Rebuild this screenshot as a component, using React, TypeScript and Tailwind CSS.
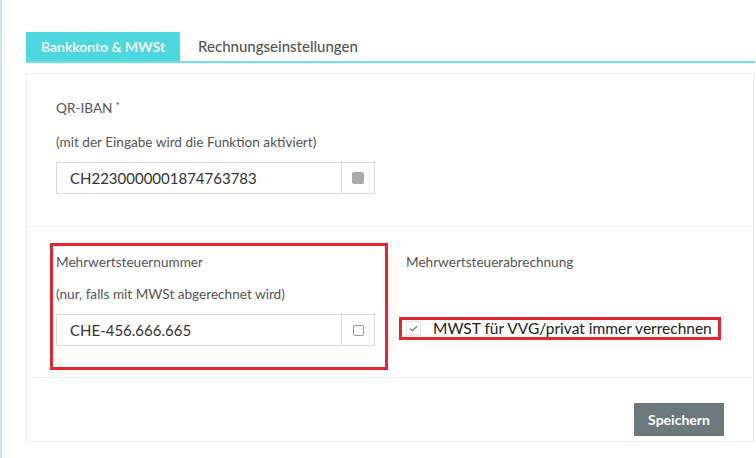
import React from "react";

const font = { fontFamily: "Lato, 'Open Sans', sans-serif" };

function InputWithAddon({ value, filled }: { value: string; filled: boolean }) {
  return (
    <div className="flex h-[32px] w-[319px] border border-[#dcdcdc] bg-white">
      <div className="flex flex-1 items-center pl-[13px] text-[15px] text-[#333]">{value}</div>
      <div className="flex w-[33px] items-center justify-center border-l border-[#dcdcdc]">
        {filled ? (
          <div className="h-[12px] w-[12px] rounded-[2px] bg-[#ababab]" />
        ) : (
          <div className="h-[11px] w-[11px] rounded-[2px] border border-[#9a9a9a] bg-white" />
        )}
      </div>
    </div>
  );
}

export default function App() {
  return (
    <div className="flex min-h-[458px] w-[756px] bg-white" style={font}>
      <div className="w-[2px] shrink-0 bg-[#d7e2ef]" />
      <div className="flex-1 pl-[24px] pr-[1px] pt-[32px]">
        {/* Tabs */}
        <div className="flex border-b-2 border-[#6fdfe4]">
          <div className="flex h-[29px] items-center bg-[#4fd7e0] px-[15px] text-[14px] font-semibold text-white">
            Bankkonto &amp; MWSt
          </div>
          <div className="flex h-[29px] items-center pl-[18px] text-[15px] font-medium text-[#555]">
            Rechnungseinstellungen
          </div>
        </div>

        {/* Card */}
        <div className="mt-[10px] w-[728px] border border-[#eeeeee] bg-white">
          {/* Section 1 */}
          <div className="border-b border-[#eeeeee] px-[29px] pb-[32px] pt-[25px]">
            <div className="flex h-[18px] items-center text-[13.6px] text-[#555]">
              QR-IBAN<sup className="relative -top-[3px] ml-[3px] text-[10px]">*</sup>
            </div>
            <div className="mt-[16px] flex h-[18px] items-center text-[13.6px] text-[#555]">
              (mit der Eingabe wird die Funktion aktiviert)
            </div>
            <div className="mt-[11px]">
              <InputWithAddon value="CH2230000001874763783" filled />
            </div>
          </div>

          {/* Section 2 */}
          <div className="flex border-b border-[#eeeeee] px-[29px] pb-[31px] pt-[26px]">
            <div className="relative w-[319px]">
              <div className="pointer-events-none absolute -bottom-[24px] -left-[6px] -right-[13px] -top-[10px] border-[3px] border-[#e52530]" />
              <div className="flex h-[18px] items-center text-[13.6px] text-[#555]">Mehrwertsteuernummer</div>
              <div className="mt-[14px] flex h-[18px] items-center text-[13.6px] text-[#555]">
                (nur, falls mit MWSt abgerechnet wird)
              </div>
              <div className="mt-[11px]">
                <InputWithAddon value="CHE-456.666.665" filled={false} />
              </div>
            </div>
            <div className="ml-[31px] flex-1">
              <div className="flex h-[18px] items-center text-[13.6px] text-[#555]">Mehrwertsteuerabrechnung</div>
              <div className="relative mt-[49px] inline-flex h-[17px] items-center">
                <div className="pointer-events-none absolute -bottom-[3px] -left-[7px] -right-[9px] -top-[3px] border-[3px] border-[#e52530]" />
                <div className="flex h-[15px] w-[15px] items-center justify-center border border-[#e2e2e2] bg-white">
                  <svg width="9" height="7" viewBox="0 0 9 7">
                    <path d="M1 3.6 L3.4 5.8 L8 1.2" fill="none" stroke="#8a8a8a" strokeWidth="1.5" />
                  </svg>
                </div>
                <span className="ml-[12px] text-[15.5px] leading-none text-[#222]">MWST für VVG/privat immer verrechnen</span>
              </div>
            </div>
          </div>

          {/* Section 3 */}
          <div className="flex justify-end pb-[5px] pr-[29px] pt-[25px]">
            <button className="flex h-[33px] w-[90px] items-center justify-center bg-[#6b787c] text-[14px] font-bold text-white">
              Speichern
            </button>
          </div>
        </div>
      </div>
    </div>
  );
}
